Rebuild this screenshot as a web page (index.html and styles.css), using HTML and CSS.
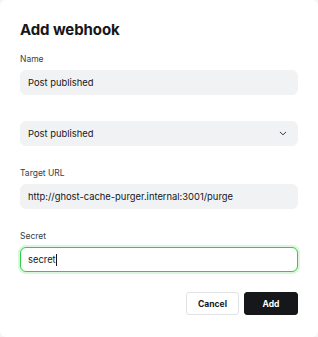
FILE: index.html
```html
<!DOCTYPE html>
<html lang="en">

<head>
    <meta charset="utf-8">
    <meta name="viewport" content="width=device-width, initial-scale=1.0">
    <title>Add webhook</title>
    <link rel="stylesheet" href="styles.css">
</head>

<body>
    <div class="modal">
        <h1 class="titel">Add webhook</h1>

        <div class="felt">
            <label>Name</label>
            <div class="input">Post published</div>
        </div>

        <div class="felt vaelg-felt">
            <div class="input vaelg">
                <span>Post published</span>
                <svg width="8" height="5" viewBox="0 0 8 5">
                    <path d="M1.2 1.2 L4 3.8 L6.8 1.2" fill="none" stroke="#394047" stroke-width="1" stroke-linecap="round" stroke-linejoin="round" />
                </svg>
            </div>
        </div>

        <div class="felt">
            <label>Target URL</label>
            <div class="input">http://ghost-cache-purger.internal:3001/purge</div>
        </div>

        <div class="felt">
            <label>Secret</label>
            <div class="input aktiv">secret<span class="caret"></span></div>
        </div>

        <div class="knapper">
            <button class="annuller">Cancel</button>
            <button class="tilfoej">Add</button>
        </div>
    </div>
</body>

</html>
```

FILE: styles.css
```css
html,
body,
* {
    margin: 0;
    padding: 0;
    box-sizing: border-box;
}

body {
    background-color: #f4f5f6;
    font-family: Inter, "Noto Sans", sans-serif;
    color: #15171a;
}

.modal {
    background-color: white;
    width: 318px;
    height: 337px;
    border-radius: 6px;
    padding: 18px 20px 0 20px;
}

.titel {
    font-size: 15px;
    line-height: 24px;
    font-weight: 700;
    letter-spacing: -0.1px;
    margin-bottom: 10px;
}

.felt {
    display: flex;
    flex-direction: column;
    gap: 4px;
    margin-bottom: 20px;
}

.felt label {
    font-size: 8.5px;
    line-height: 14px;
    color: #394047;
}

.input {
    height: 25px;
    border-radius: 6px;
    background-color: #f1f2f4;
    border: 1px solid #f1f2f4;
    padding: 0 7px;
    font-size: 9.4px;
    line-height: 23px;
    color: #15171a;
    display: flex;
    align-items: center;
}

/* margin falder sammen med forrige felt, derfor 26 */
.vaelg-felt {
    margin-top: 26px;
}

.vaelg {
    justify-content: space-between;
    padding-right: 10px;
}

.aktiv {
    background-color: white;
    border-color: #30cf43;
    box-shadow: 0 0 0 2px rgba(48, 207, 67, 0.18);
}

.caret {
    display: inline-block;
    width: 1px;
    height: 12px;
    background-color: #15171a;
}

.knapper {
    display: flex;
    justify-content: flex-end;
    gap: 5px;
    margin-top: 1px;
}

button {
    height: 23px;
    border-radius: 3px;
    font-family: Inter, "Noto Sans", sans-serif;
    font-size: 8.5px;
    font-weight: 700;
    padding: 0 8px;
}

.annuller {
    width: 53px;
    background-color: white;
    border: 1px solid #e1e3e6;
    color: #15171a;
}

.tilfoej {
    width: 54px;
    background-color: #15171a;
    border: 1px solid #15171a;
    color: white;
}
```
